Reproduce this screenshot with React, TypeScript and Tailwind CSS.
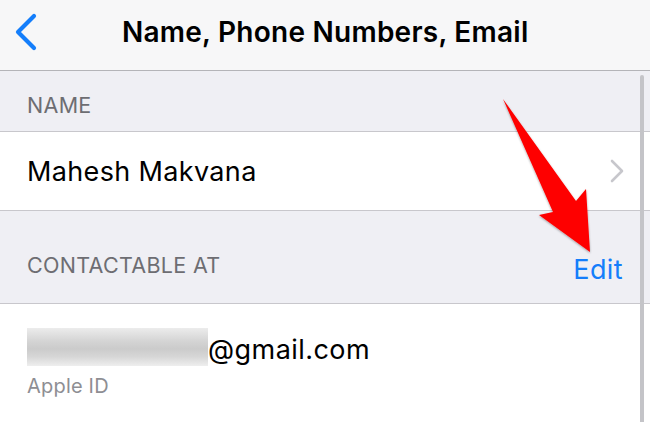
import React from "react";

export default function App() {
  return (
    <div
      className="relative w-[650px] h-[422px] overflow-hidden bg-[#efeff4]"
      style={{ fontFamily: "Inter, 'Noto Sans', sans-serif" }}
    >
      {/* Nav bar */}
      <div className="relative h-[71px] bg-[#f7f7f8] border-b border-[#b4b4b8]">
        <svg className="absolute left-[13px] top-[12px]" width="26" height="40" viewBox="0 0 26 40">
          <path d="M21 4 L5 20 L21 36" fill="none" stroke="#147efb" strokeWidth="4.2" strokeLinecap="round" strokeLinejoin="round" />
        </svg>
        <div className="pl-[122px] pt-[18px] text-[28px] leading-none font-semibold text-black tracking-[0.25px]">
          Name, Phone Numbers, Email
        </div>
      </div>

      {/* Section NAME */}
      <div className="h-[61px] border-b border-[#c8c7cc] pl-[27px] pt-[24px]">
        <div className="text-[21.5px] leading-none text-[#6d6d72] tracking-[0.3px]">NAME</div>
      </div>

      {/* Row name */}
      <div className="h-[79px] bg-white border-b border-[#c8c7cc] flex items-center justify-between pl-[27px] pr-[26px]">
        <div className="text-[27px] leading-none text-black tracking-[0.35px]">Mahesh Makvana</div>
        <svg width="14" height="24" viewBox="0 0 14 24">
          <path d="M2 2 L12 12 L2 22" fill="none" stroke="#c7c7cc" strokeWidth="2.6" strokeLinecap="round" strokeLinejoin="round" />
        </svg>
      </div>

      {/* Section CONTACTABLE AT */}
      <div className="h-[93px] border-b border-[#c8c7cc] flex justify-between pl-[27px] pr-[27px]">
        <div className="mt-[44px] text-[21.5px] leading-none text-[#6d6d72] tracking-[0.3px]">CONTACTABLE AT</div>
        <div className="mt-[45px] text-[27px] leading-none text-[#147efb] tracking-[0.4px]">Edit</div>
      </div>

      {/* Row email */}
      <div className="h-[120px] bg-white pl-[27px] pt-[24px]">
        <div className="flex items-start">
          <div className="w-[181px] h-[38px] bg-[linear-gradient(to_bottom,#ececec,#d4d4d4_35%,#cbcbcb_55%,#d6d6d6_75%,#eeeeee)]" />
          <div className="mt-[8px] text-[27px] leading-none text-black tracking-[0.45px]">@gmail.com</div>
        </div>
        <div className="mt-[10px] text-[20px] leading-none text-[#8e8e93] tracking-[0.2px]">Apple ID</div>
      </div>

      {/* Scrollbar */}
      <div className="absolute left-[640px] top-[75px] w-[4px] h-[360px] rounded-full bg-[#c4c4c8]" />

      {/* Red arrow */}
      <svg className="absolute left-0 top-0" width="650" height="422" viewBox="0 0 650 422">
        <defs>
          <filter id="sh" x="-20%" y="-20%" width="140%" height="140%">
            <feDropShadow dx="0" dy="1" stdDeviation="1.2" floodColor="#000" floodOpacity="0.35" />
          </filter>
        </defs>
        <polygon
          points="503,99 576,201 586,189 590,252 539,215 553,212"
          fill="#fe0000"
          filter="url(#sh)"
        />
      </svg>
    </div>
  );
}
